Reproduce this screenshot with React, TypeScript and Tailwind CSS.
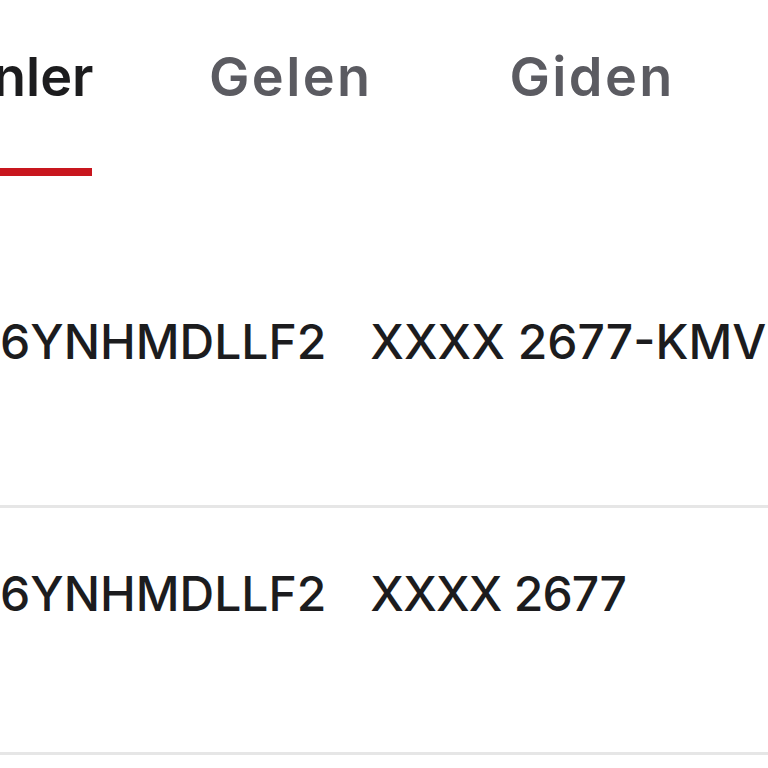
import React from "react";

export default function App() {
  return (
    <div
      className="w-[768px] h-[768px] overflow-hidden bg-white"
      style={{ fontFamily: "Inter, 'Noto Sans', sans-serif" }}
    >
      <div className="flex h-[178px] items-start">
        <div className="flex flex-col w-[92px] h-full">
          <div className="pt-[44px] h-[168px] ml-[-7px] text-[54px] leading-[66px] font-semibold text-[#1c1c1e] whitespace-nowrap">
            nler
          </div>
          <div className="h-[8px] bg-[#c8161e]" />
        </div>
        <div className="ml-[117px] pt-[44px] text-[54px] leading-[66px] font-semibold text-[#5b5b61] tracking-[2.4px] whitespace-nowrap">
          Gelen
        </div>
        <div className="ml-[137px] pt-[44px] text-[54px] leading-[66px] font-semibold text-[#5b5b61] tracking-[2.4px] whitespace-nowrap">
          Giden
        </div>
      </div>
      <div className="h-[330px] border-b-[3px] border-[#e6e6e6] pt-[136px]">
        <div className="flex gap-[44px] text-[48px] leading-[56px] font-medium text-[#1c1c1e] whitespace-nowrap">
          <span>6YNHMDLLF2</span>
          <span>XXXX 2677-KMV</span>
        </div>
      </div>
      <div className="h-[247px] border-b-[3px] border-[#e6e6e6] pt-[58px]">
        <div className="flex gap-[44px] text-[48px] leading-[56px] font-medium text-[#1c1c1e] whitespace-nowrap">
          <span>6YNHMDLLF2</span>
          <span className="tracking-[-0.8px]">XXXX 2677</span>
        </div>
      </div>
    </div>
  );
}
